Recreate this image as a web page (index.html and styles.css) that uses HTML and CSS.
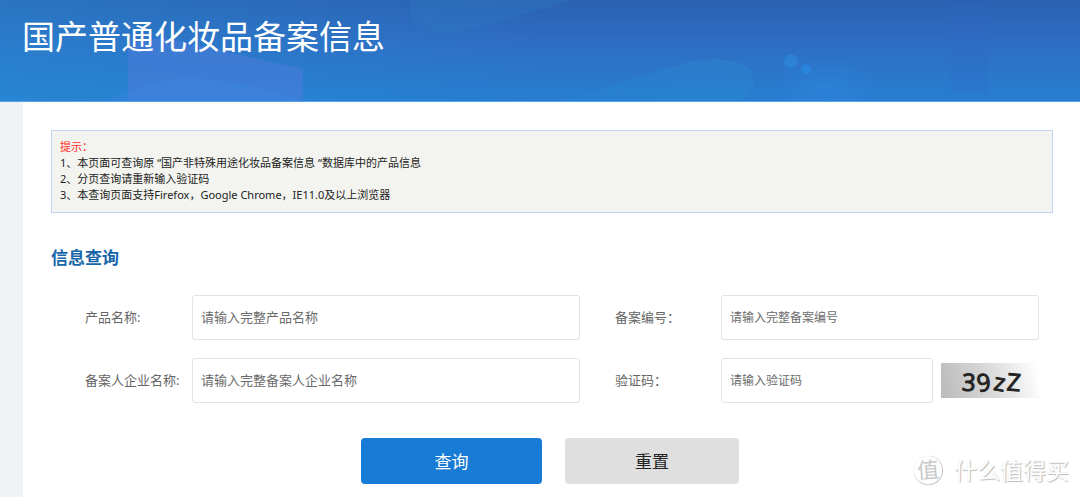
FILE: index.html
```html
<!DOCTYPE html>
<html lang="zh-CN">
<head>
<meta charset="utf-8">
<title>国产普通化妆品备案信息</title>
<link rel="stylesheet" href="styles.css">
</head>
<body>
<header class="banner">
  <svg class="banner-art" viewBox="0 0 1080 102" preserveAspectRatio="none" aria-hidden="true">
    <defs>
      <radialGradient id="glow"><stop offset="0" stop-color="#2f87e0" stop-opacity=".5"/><stop offset="1" stop-color="#2f87e0" stop-opacity="0"/></radialGradient>
      <linearGradient id="pill" x1="0" y1="1" x2="1" y2="0"><stop offset="0" stop-color="#298cd6" stop-opacity=".1"/><stop offset="1" stop-color="#2f8acb" stop-opacity=".4"/></linearGradient>
    </defs>
    <path d="M128 44 L165 38 L303 70 V102 H128 Z" fill="#4a7cdb" fill-opacity=".6"/>
    <path d="M106 102 Q150 80 190 79 Q250 82 303 102 Z" fill="#3c87e2" fill-opacity=".4"/>
    <path d="M411 0 C406 18 420 33 446 33 C470 33 505 19 573 0 Z" fill="#2f7cc4" fill-opacity=".35"/>
    <path d="M560 102 L684 64 C722 54 755 62 754 83 Q752 96 740 102 Z" fill="url(#pill)"/>
    <ellipse cx="826" cy="92" rx="54" ry="36" fill="url(#glow)"/>
    <rect x="950" width="38" height="94" fill="#3062c4" fill-opacity=".12"/>
    <circle cx="791" cy="62" r="7" fill="#2c88dc" fill-opacity=".7"/>
    <circle cx="806" cy="70" r="5" fill="#2889e2" fill-opacity=".8"/>
  </svg>
  <h1 class="banner-title">国产普通化妆品备案信息</h1>
</header>
<main class="page">
  <section class="notice">
    <p class="notice-head">提示：</p>
    <p>1、本页面可查询原 “国产非特殊用途化妆品备案信息 “数据库中的产品信息</p>
    <p>2、分页查询请重新输入验证码</p>
    <p>3、本查询页面支持Firefox，Google Chrome，IE11.0及以上浏览器</p>
  </section>
  <h2 class="section-title">信息查询</h2>
  <form class="search">
    <div class="fields">
      <label for="product">产品名称:</label>
      <input class="field" id="product" type="text" placeholder="请输入完整产品名称">
      <label class="second" for="number">备案编号：</label>
      <input class="field small" id="number" type="text" placeholder="请输入完整备案编号">
      <label for="company">备案人企业名称:</label>
      <input class="field" id="company" type="text" placeholder="请输入完整备案人企业名称">
      <label class="second" for="code">验证码：</label>
      <div class="code-row">
        <input class="field small" id="code" type="text" placeholder="请输入验证码">
        <svg class="captcha" viewBox="0 0 98 35" role="img" aria-label="验证码图片">
          <defs><linearGradient id="cap" x1="0" y1=".4" x2="1" y2=".3"><stop offset="0" stop-color="#bdbdbd"/><stop offset=".5" stop-color="#dadada"/><stop offset="1" stop-color="#fff"/></linearGradient></defs>
          <rect width="98" height="35" fill="url(#cap)"/>
          <g class="captcha-text">
            <text x="21" y="28" transform="rotate(3 28 20)">3</text>
            <text x="36" y="28" transform="rotate(-9 43 20)">9</text>
            <text x="53" y="28" transform="rotate(10 59 20)">z</text>
            <text x="66" y="28" transform="rotate(5 74 20)">Z</text>
          </g>
        </svg>
      </div>
    </div>
    <div class="actions">
      <button class="btn primary" type="submit">查询</button>
      <button class="btn reset" type="reset">重置</button>
    </div>
  </form>
</main>
<div class="watermark">
  <svg class="mark" viewBox="0 0 32 32" aria-hidden="true">
    <circle cx="16.5" cy="16.5" r="14" fill="none" stroke="#cfcfcf" stroke-width="1.5"/>
    <circle cx="16" cy="16" r="14" fill="#fff"/>
    <text class="mark-text" x="5" y="24" transform="rotate(-5 16 16)">值</text>
  </svg>
  <span>什么值得买</span>
</div>
</body>
</html>
```
FILE: styles.css
```css
* { box-sizing: border-box; }
body {
  margin: 0;
  min-height: 100vh;
  display: flex;
  flex-direction: column;
  background: #eff3f6;
  color: #222;
  font-family: "Noto Sans", "Noto Sans CJK SC", sans-serif;
}
h1, h2, p { margin: 0; }
.banner {
  position: relative;
  padding: 13px 22px 40px;
  border-bottom: 1px solid #5aa2e6;
  background:
    linear-gradient(90deg, rgba(38, 145, 215, .4), rgba(38, 145, 215, 0) 50%),
    linear-gradient(#2b61b1, #2e6dc3 40%, #277ed1);
}
.banner-art {
  position: absolute;
  inset: 0;
  width: 100%;
  height: 100%;
}
.banner-title {
  position: relative;
  color: #fff;
  font-size: 33px;
  line-height: 48px;
  font-weight: 400;
}
.page {
  flex: 1;
  margin-left: 23px;
  padding: 28px 27px 12px 28px;
  background: #fff;
}
.notice {
  padding: 8px 8px 9px;
  border: 1px solid #c3d5f5;
  background: #f3f4ef;
  font-size: 11px;
  line-height: 16px;
}
.notice-head { color: #ff2a20; }
.section-title {
  margin-top: 32px;
  color: #1766a9;
  font-size: 17px;
  line-height: 26px;
}
.search { padding: 24px 14px 0 34px; }
.fields {
  display: grid;
  grid-template-columns: 107px 388fr 141px 318fr;
  row-gap: 18px;
  align-items: center;
}
label {
  padding-bottom: 2px;
  color: #666;
  font-size: 13px;
  white-space: nowrap;
}
.second { padding-left: 35px; }
.field {
  width: 100%;
  min-width: 0;
  height: 45px;
  padding: 0 8px 2px;
  border: 1px solid #e3e3e3;
  border-radius: 3px;
  background: #fff;
  font-family: inherit;
  font-size: 13px;
}
.field.small { padding-bottom: 0; font-size: 12px; }
.field::placeholder { color: #6b6b6b; opacity: 1; }
.code-row { display: flex; align-items: center; gap: 8px; }
.code-row .field { flex: 1; }
.captcha { width: 98px; height: 35px; flex: none; overflow: visible; }
.captcha-text {
  fill: #222;
  stroke: #222;
  stroke-width: 1;
  font-family: "Open Sans", sans-serif;
  font-size: 24px;
  font-weight: 500;
}
.actions {
  display: flex;
  justify-content: center;
  gap: 23px;
  margin-top: 35px;
  padding-right: 24px;
}
.btn {
  height: 46px;
  padding: 0 0 2px;
  border: 0;
  border-radius: 4px;
  font-family: inherit;
  font-size: 17px;
}
.primary { width: 181px; background: #187bd5; color: #fff; }
.reset { width: 174px; background: #dfdfdf; color: #222; }
.watermark {
  position: absolute;
  right: 11px;
  bottom: 10px;
  display: flex;
  align-items: center;
  gap: 10px;
  color: #fff;
  font-size: 23px;
  line-height: 34px;
  text-shadow: 1px 1px 1px #bbb, 0 0 1px #ddd;
}
.mark { width: 32px; height: 32px; }
.mark-text { font-size: 22px; fill: #c8c8c8; text-shadow: none; }
```
